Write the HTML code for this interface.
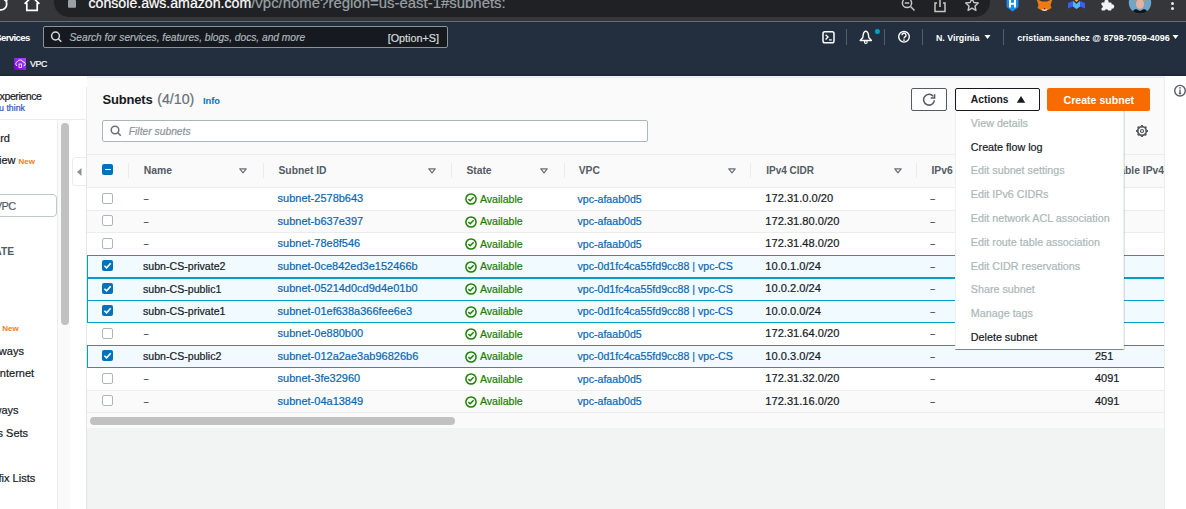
<!DOCTYPE html>
<html><head><meta charset="utf-8">
<style>
*{box-sizing:border-box;margin:0;padding:0}
html,body{width:1186px;height:509px;overflow:hidden;background:#fff;font-family:"Liberation Sans",sans-serif;color:#16191f;position:relative}
.t{position:absolute;white-space:nowrap}
.t.n{-webkit-text-stroke:0.2px currentColor}
.r{position:absolute}
</style></head><body>
<div class="r" style="left:0px;top:0px;width:1186px;height:21px;background:#35363a;"></div>
<div class="r" style="left:54px;top:-15px;width:936px;height:31.5px;background:#202124;border-radius:15px"></div>
<div class="t n" style="left:88.5px;top:-5.75px;font-size:14.15px;line-height:17.69px;font-weight:400;color:#fff;font-style:normal">console.aws.amazon.com<span style="color:#9aa0a6;font-size:14.95px">/vpc/home?region=us-east-1#subnets:</span></div>
<div class="r" style="left:0px;top:20.5px;width:1186px;height:1px;background:#6a6d71;"></div>
<svg class="r" style="left:0px;top:0px" width="12" height="12" viewBox="0 0 12 12"><path d="M-1.5 9.3 A5.6 5.6 0 0 0 6.2 2.2" stroke="#fff" stroke-width="1.7" fill="none"/><path d="M3.2 -0.5 L7.6 -0.5 L7.2 3.5 Z" fill="#fff"/></svg>
<svg class="r" style="left:22px;top:0px" width="20" height="12" viewBox="0 0 20 12"><path d="M2.6 3.8 L10 -3.2 L17.4 3.8 M4.8 2.8 V10.3 H15.2 V2.8" stroke="#fff" stroke-width="1.7" fill="none" stroke-linejoin="miter"/></svg>
<svg class="r" style="left:67px;top:0px" width="10" height="9" viewBox="0 0 10 9"><rect x="1" y="0" width="8" height="7.8" rx="0.8" fill="#9aa0a6"/></svg>
<svg class="r" style="left:901px;top:0px" width="16" height="13" viewBox="0 0 16 13"><circle cx="6" cy="3" r="4.6" stroke="#c4c7c5" stroke-width="1.5" fill="none"/><path d="M9.5 6.5 L13.5 10.5 M3.8 3 H8.2" stroke="#c4c7c5" stroke-width="1.5" fill="none"/></svg>
<svg class="r" style="left:933px;top:0px" width="14" height="13" viewBox="0 0 14 13"><path d="M4 3 H2 V11.5 H12 V3 H10 M7 -1 V7" stroke="#c4c7c5" stroke-width="1.5" fill="none"/></svg>
<svg class="r" style="left:964px;top:0px" width="16" height="13" viewBox="0 0 16 13"><path d="M8 -1.5 L9.9 2.5 L14.3 3 L11 6 L11.9 10.4 L8 8.2 L4.1 10.4 L5 6 L1.7 3 L6.1 2.5 Z" stroke="#c4c7c5" stroke-width="1.4" fill="none" stroke-linejoin="round"/></svg>
<svg class="r" style="left:1006px;top:0px" width="13" height="12" viewBox="0 0 13 12"><path d="M0.5 -1 H12.5 V7 L6.5 11.5 L0.5 7 Z" fill="#1a8af5"/><path d="M4 0 V7.5 M9 0 V7.5 M4 3.8 H9" stroke="#fff" stroke-width="2"/></svg>
<svg class="r" style="left:1035px;top:0px" width="19" height="12" viewBox="0 0 19 12"><path d="M1.5 -1 L3.5 5 L2.5 8 L6 10 L9.5 11 L13 10 L16.5 8 L15.5 5 L17.5 -1 L12 1.5 H7 Z" fill="#f07a12"/><path d="M7 9.3 Q9.5 11.5 12 9.3" stroke="#e8d8c8" stroke-width="1.3" fill="none"/><circle cx="9.5" cy="8.6" r="0.7" fill="#222"/></svg>
<svg class="r" style="left:1067px;top:0px" width="19" height="11" viewBox="0 0 19 11"><path d="M1 3 L6 1 L9.5 4 L13 1 L18 3 V8.5 L13 6.5 L9.5 9 L6 6.5 L1 8.5 Z" fill="#3a5cf0"/><path d="M6 1 L9.5 4 L13 1 L13 6.5 L9.5 9 L6 6.5 Z" fill="#58b4f5"/><path d="M7.5 0 L9.5 -1.5 L11.5 0 L9.5 2 Z" fill="#f5b820"/></svg>
<svg class="r" style="left:1100px;top:0px" width="16" height="11" viewBox="0 0 16 11"><rect x="1.5" y="2.5" width="10" height="8" rx="0.8" fill="#f1f3f4"/><circle cx="6.5" cy="2" r="2.2" fill="#f1f3f4"/><circle cx="12" cy="6.5" r="2.2" fill="#f1f3f4"/><circle cx="6.5" cy="11" r="1.8" fill="#35363a"/><circle cx="1.2" cy="6.5" r="1.6" fill="#35363a"/></svg>
<svg class="r" style="left:1128px;top:0px" width="24" height="15" viewBox="0 0 24 15"><defs><clipPath id="avc"><circle cx="12" cy="2.5" r="11.2"/></clipPath></defs><g clip-path="url(#avc)"><rect x="0" y="-10" width="24" height="25" fill="#6fa5c8"/><ellipse cx="12" cy="4" rx="4" ry="5" fill="#e3b2a2"/><path d="M6.5 -4 Q12 -8 17.5 -4 L17 2 Q15 -1 12 -0.5 Q9 -1 7 2 Z" fill="#e8902a"/><path d="M3 15 Q4 10 8 9 L12 11 L16 9 Q20 10 21 15 Z" fill="#151515"/></g></svg>
<svg class="r" style="left:1170px;top:0px" width="6" height="13" viewBox="0 0 6 13"><circle cx="2.5" cy="3.5" r="1.5" fill="#e8eaed"/><circle cx="2.5" cy="8.5" r="1.5" fill="#e8eaed"/></svg>
<div class="r" style="left:0px;top:21.5px;width:1186px;height:54px;background:#232f3e;"></div>
<div class="r" style="left:0px;top:74.3px;width:1186px;height:1.3px;background:#1e2937;"></div>
<div class="t" style="right:1156.2px;top:31.57px;font-size:9.6px;line-height:12.0px;font-weight:700;color:#fff;font-style:normal;letter-spacing:-0.6px">Services</div>
<div class="r" style="left:42.5px;top:26.2px;width:405px;height:21.7px;background:#16191f;border:1px solid #879596;border-radius:2px"></div>
<svg class="r" style="left:50px;top:31px" width="13" height="12" viewBox="0 0 13 12"><circle cx="5.5" cy="5" r="3.9" stroke="#d5dbdb" stroke-width="1.5" fill="none"/><path d="M8.3 7.8 L11.3 10.8" stroke="#d5dbdb" stroke-width="1.6"/></svg>
<div class="t n" style="left:69.5px;top:32.29px;font-size:10.2px;line-height:12.75px;font-weight:400;color:#aab7b8;font-style:italic">Search for services, features, blogs, docs, and more</div>
<div class="t n" style="left:387.7px;top:31.51px;font-size:10.8px;line-height:13.5px;font-weight:400;color:#d5dbdb;font-style:normal">[Option+S]</div>
<svg class="r" style="left:821px;top:30px" width="15" height="15" viewBox="0 0 15 15"><rect x="2" y="1.8" width="11" height="11" rx="1.8" stroke="#fff" stroke-width="1.5" fill="none"/><path d="M4.6 4.8 L7 7.1 L4.6 9.4" stroke="#fff" stroke-width="1.4" fill="none"/><path d="M8 9.9 H10.8" stroke="#fff" stroke-width="1.2"/></svg>
<div class="r" style="left:846px;top:29px;width:1px;height:16px;background:#555d68;"></div>
<svg class="r" style="left:858px;top:28px" width="22" height="17" viewBox="0 0 22 17"><path d="M2.2 12.5 L4.8 9.5 L5.3 6.2 Q6 3.2 7.8 3.2 Q9.6 3.2 10.3 6.2 L10.8 9.5 L13.4 12.5 Z" stroke="#fff" stroke-width="1.4" fill="none" stroke-linejoin="round"/><circle cx="7.8" cy="14" r="1.4" stroke="#fff" stroke-width="1.1" fill="none"/><circle cx="19.4" cy="3.6" r="2.5" fill="#00a1c9"/></svg>
<div class="r" style="left:884px;top:29px;width:1px;height:16px;background:#555d68;"></div>
<svg class="r" style="left:897px;top:30px" width="14" height="14" viewBox="0 0 14 14"><circle cx="7" cy="6.8" r="5.3" stroke="#fff" stroke-width="1.4" fill="none"/><path d="M5 5.3 A2 2 0 1 1 7.8 7 Q7 7.5 7 8.6" stroke="#fff" stroke-width="1.4" fill="none"/><circle cx="7" cy="10.1" r="0.85" fill="#fff"/></svg>
<div class="r" style="left:922px;top:29px;width:1px;height:16px;background:#555d68;"></div>
<div class="t" style="left:936px;top:32.95px;font-size:8.8px;line-height:11.0px;font-weight:700;color:#fff;font-style:normal">N. Virginia</div>
<svg class="r" style="left:983.5px;top:34px" width="7" height="6" viewBox="0 0 7 6"><path d="M0.5 1 H6.5 L3.5 5 Z" fill="#fff"/></svg>
<div class="r" style="left:1003px;top:29px;width:1px;height:16px;background:#555d68;"></div>
<div class="t" style="left:1017.3px;top:32.76px;font-size:9px;line-height:11.25px;font-weight:700;color:#fff;font-style:normal">cristiam.sanchez @ 8798-7059-4096</div>
<svg class="r" style="left:1172px;top:34px" width="7" height="6" viewBox="0 0 7 6"><path d="M0.5 1 H6.5 L3.5 5 Z" fill="#fff"/></svg>
<svg class="r" style="left:14px;top:58px" width="12" height="12" viewBox="0 0 12 12"><defs><linearGradient id="vg" x1="0" y1="1" x2="1" y2="0"><stop offset="0" stop-color="#7300c8"/><stop offset="1" stop-color="#a64dff"/></linearGradient></defs><rect width="12" height="12" fill="url(#vg)"/><path d="M3 8 A2.5 2.5 0 0 1 3.5 3.5 A3 3 0 0 1 9 4 A2 2 0 0 1 9.5 8" stroke="#fff" stroke-width="0.9" fill="none"/><rect x="5" y="6" width="2.4" height="3.5" stroke="#fff" stroke-width="0.8" fill="none"/></svg>
<div class="t n" style="left:30px;top:58.95px;font-size:8.8px;line-height:11.0px;font-weight:400;color:#fff;font-style:normal;letter-spacing:-0.4px">VPC</div>
<div class="r" style="left:0px;top:75.5px;width:86.5px;height:434px;background:#fff;"></div>
<div class="r" style="left:0px;top:119px;width:86.5px;height:1px;background:#eaeded;"></div>
<div class="r" style="left:86px;top:87px;width:1px;height:32px;background:#eaeded;"></div>
<div class="r" style="left:57px;top:120px;width:1px;height:389px;background:#eaeded;"></div>
<div class="r" style="left:58px;top:120px;width:11.5px;height:389px;background:#fafafa;"></div>
<div class="r" style="left:61px;top:122.8px;width:8px;height:202.7px;background:#c1c1c1;border-radius:4px"></div>
<div class="t n" style="right:1144.5px;top:89.70px;font-size:10.6px;line-height:13.25px;font-weight:400;color:#16191f;font-style:normal;letter-spacing:-0.45px">New VPC Experience</div>
<div class="t n" style="right:1161px;top:103.45px;font-size:8.8px;line-height:11.0px;font-weight:400;color:#2a55b5;font-style:normal">Tell us what you think</div>
<div class="t n" style="right:1176px;top:132.31px;font-size:11px;line-height:13.75px;font-weight:400;color:#16191f;font-style:normal">VPC Dashboard</div>
<div class="t n" style="right:1170.5px;top:154.31px;font-size:11px;line-height:13.75px;font-weight:400;color:#16191f;font-style:normal">EC2 Global View</div>
<div class="t" style="left:18.5px;top:157.23px;font-size:8px;line-height:10.0px;font-weight:700;color:#f0801a;font-style:normal">New</div>
<div class="r" style="left:-20px;top:194.2px;width:76.7px;height:22.5px;background:#fff;border:1px solid #c2c9c9;border-radius:4px"></div>
<div class="t n" style="right:1170.4px;top:199.61px;font-size:11px;line-height:13.75px;font-weight:400;color:#545b64;font-style:normal;letter-spacing:-0.6px">Filter by VPC</div>
<div class="t" style="right:1171.8px;top:245.59px;font-size:10.3px;line-height:12.88px;font-weight:700;color:#545b64;font-style:normal">VIRTUAL PRIVATE</div>
<div class="t" style="left:2.2px;top:323.83px;font-size:8px;line-height:10.0px;font-weight:700;color:#f0801a;font-style:normal">New</div>
<div class="t n" style="right:1162.1px;top:344.51px;font-size:11px;line-height:13.75px;font-weight:400;color:#16191f;font-style:normal">Carrier Gateways</div>
<div class="t n" style="right:1151.9px;top:367.41px;font-size:11px;line-height:13.75px;font-weight:400;color:#16191f;font-style:normal">Egress Only Internet</div>
<div class="t n" style="right:1167.4px;top:404.31px;font-size:11px;line-height:13.75px;font-weight:400;color:#16191f;font-style:normal">Gateways</div>
<div class="t n" style="right:1157.9px;top:426.81px;font-size:11px;line-height:13.75px;font-weight:400;color:#16191f;font-style:normal">DHCP Options Sets</div>
<div class="t n" style="right:1150.8px;top:471.81px;font-size:11px;line-height:13.75px;font-weight:400;color:#16191f;font-style:normal">Managed Prefix Lists</div>
<div class="r" style="left:71.5px;top:157px;width:16px;height:29px;background:#fff;border:1px solid #eaeded;border-right:none;border-radius:4px 0 0 4px"></div>
<svg class="r" style="left:76px;top:167px" width="7" height="10" viewBox="0 0 7 10"><path d="M5.5 1 V9 L1 5 Z" fill="#879596"/></svg>
<div class="r" style="left:86.5px;top:75.5px;width:1078px;height:434px;background:#f2f3f3;"></div>
<div class="r" style="left:86.5px;top:77px;width:1078px;height:351px;background:#fafafa;border-top:1px solid #eaeded"></div>
<div class="t" style="left:102.4px;top:91.87px;font-size:13px;line-height:16.25px;font-weight:700;color:#16191f;font-style:normal;letter-spacing:-0.15px">Subnets</div>
<div class="t n" style="left:157.2px;top:90.70px;font-size:14.2px;line-height:17.75px;font-weight:400;color:#687078;font-style:normal">(4/10)</div>
<div class="t" style="left:203px;top:96.37px;font-size:9.3px;line-height:11.62px;font-weight:700;color:#0073bb;font-style:normal">Info</div>
<div class="r" style="left:102.4px;top:120.2px;width:546px;height:21.6px;background:#fff;border:1px solid #aab7b8;border-radius:2px"></div>
<svg class="r" style="left:110px;top:125px" width="12" height="12" viewBox="0 0 12 12"><circle cx="5" cy="5" r="3.8" stroke="#687078" stroke-width="1.5" fill="none"/><path d="M7.8 7.8 L10.8 10.8" stroke="#687078" stroke-width="1.6"/></svg>
<div class="t n" style="left:128.8px;top:125.59px;font-size:10.3px;line-height:12.88px;font-weight:400;color:#879596;font-style:italic">Filter subnets</div>
<svg class="r" style="left:1135px;top:124px" width="14" height="14" viewBox="0 0 14 14"><circle cx="7" cy="7" r="4.3" stroke="#545b64" stroke-width="1.7" fill="none"/><rect x="6" y="1" width="2" height="2.2" fill="#545b64" transform="rotate(0 7 7)"/><rect x="6" y="1" width="2" height="2.2" fill="#545b64" transform="rotate(45 7 7)"/><rect x="6" y="1" width="2" height="2.2" fill="#545b64" transform="rotate(90 7 7)"/><rect x="6" y="1" width="2" height="2.2" fill="#545b64" transform="rotate(135 7 7)"/><rect x="6" y="1" width="2" height="2.2" fill="#545b64" transform="rotate(180 7 7)"/><rect x="6" y="1" width="2" height="2.2" fill="#545b64" transform="rotate(225 7 7)"/><rect x="6" y="1" width="2" height="2.2" fill="#545b64" transform="rotate(270 7 7)"/><rect x="6" y="1" width="2" height="2.2" fill="#545b64" transform="rotate(315 7 7)"/><circle cx="7" cy="7" r="1.5" stroke="#545b64" stroke-width="1.2" fill="none"/></svg>
<div class="r" style="left:911.4px;top:88.3px;width:35.3px;height:22.4px;background:#fff;border:1px solid #545b64;border-radius:2px"></div>
<svg class="r" style="left:922px;top:92px" width="14" height="14" viewBox="0 0 14 14"><path d="M11.3 4.4 A5.4 5.4 0 1 0 12.4 8.2" stroke="#545b64" stroke-width="1.5" fill="none"/><path d="M12.6 2.2 V6.1 H8.7" stroke="#545b64" stroke-width="1.5" fill="none"/></svg>
<div class="r" style="left:955.3px;top:88.3px;width:84.4px;height:22.4px;background:#fff;border:1px solid #16191f;border-radius:2px"></div>
<div class="t" style="left:970.8px;top:93.99px;font-size:10.3px;line-height:12.88px;font-weight:700;color:#16191f;font-style:normal">Actions</div>
<svg class="r" style="left:1016px;top:95px" width="10" height="9" viewBox="0 0 10 9"><path d="M0.8 7.8 H9.2 L5 1 Z" fill="#16191f"/></svg>
<div class="r" style="left:1047px;top:88.3px;width:103px;height:22.4px;background:#f66c02;border-radius:2px"></div>
<div class="t" style="left:1063.5px;top:93.70px;font-size:10.6px;line-height:13.25px;font-weight:700;color:#fff;font-style:normal">Create subnet</div>
<div class="r" style="left:86.5px;top:154px;width:1078px;height:33.5px;background:#fafafa;border-top:1px solid #eaeded"></div>
<div class="r" style="left:102.3px;top:164.1px;width:10.6px;height:10.6px;background:#0073bb;border-radius:2px"></div>
<div class="r" style="left:104.6px;top:168.7px;width:6px;height:1.5px;background:#fff;"></div>
<div class="r" style="left:128.4px;top:163px;width:1px;height:15px;background:#eaeded;"></div>
<div class="r" style="left:263.4px;top:163px;width:1px;height:15px;background:#eaeded;"></div>
<div class="r" style="left:450.6px;top:163px;width:1px;height:15px;background:#eaeded;"></div>
<div class="r" style="left:563.5px;top:163px;width:1px;height:15px;background:#eaeded;"></div>
<div class="r" style="left:750.4px;top:163px;width:1px;height:15px;background:#eaeded;"></div>
<div class="r" style="left:915.6px;top:163px;width:1px;height:15px;background:#eaeded;"></div>
<div class="t" style="left:143.8px;top:164.30px;font-size:10.4px;line-height:13.0px;font-weight:700;color:#545b64;font-style:normal">Name</div>
<svg class="r" style="left:239.2px;top:167.8px" width="8" height="6" viewBox="0 0 8 6"><path d="M0.8 0.8 H7.2 L4 4.8 Z" stroke="#687078" stroke-width="1.2" fill="none" stroke-linejoin="round"/></svg>
<div class="t" style="left:278.5px;top:164.99px;font-size:10.3px;line-height:12.88px;font-weight:700;color:#545b64;font-style:normal">Subnet ID</div>
<svg class="r" style="left:427.7px;top:167.8px" width="8" height="6" viewBox="0 0 8 6"><path d="M0.8 0.8 H7.2 L4 4.8 Z" stroke="#687078" stroke-width="1.2" fill="none" stroke-linejoin="round"/></svg>
<div class="t" style="left:466.4px;top:164.99px;font-size:10.3px;line-height:12.88px;font-weight:700;color:#545b64;font-style:normal">State</div>
<svg class="r" style="left:540.2px;top:167.8px" width="8" height="6" viewBox="0 0 8 6"><path d="M0.8 0.8 H7.2 L4 4.8 Z" stroke="#687078" stroke-width="1.2" fill="none" stroke-linejoin="round"/></svg>
<div class="t" style="left:578.7px;top:164.99px;font-size:10.3px;line-height:12.88px;font-weight:700;color:#545b64;font-style:normal">VPC</div>
<svg class="r" style="left:728.2px;top:167.8px" width="8" height="6" viewBox="0 0 8 6"><path d="M0.8 0.8 H7.2 L4 4.8 Z" stroke="#687078" stroke-width="1.2" fill="none" stroke-linejoin="round"/></svg>
<div class="t" style="left:766.2px;top:165.28px;font-size:10px;line-height:12.5px;font-weight:700;color:#545b64;font-style:normal">IPv4 CIDR</div>
<svg class="r" style="left:893.5px;top:167.8px" width="8" height="6" viewBox="0 0 8 6"><path d="M0.8 0.8 H7.2 L4 4.8 Z" stroke="#687078" stroke-width="1.2" fill="none" stroke-linejoin="round"/></svg>
<div class="t" style="left:931.5px;top:164.99px;font-size:10.3px;line-height:12.88px;font-weight:700;color:#545b64;font-style:normal">IPv6</div>
<div class="t" style="right:22px;top:164.99px;font-size:10.3px;line-height:12.88px;font-weight:700;color:#545b64;font-style:normal">Available IPv4</div>
<div class="r" style="left:86.5px;top:187.4px;width:1078px;height:22.5px;background:#fff;border-top:1px solid #eaeded"></div>
<div class="r" style="left:86.5px;top:209.9px;width:1078px;height:22.5px;background:#fafafa;border-top:1px solid #eaeded"></div>
<div class="r" style="left:86.5px;top:232.4px;width:1078px;height:22.5px;background:#fff;border-top:1px solid #eaeded"></div>
<div class="r" style="left:86.5px;top:254.9px;width:1078px;height:22.5px;background:#f1faff;border-top:1px solid #eaeded"></div>
<div class="r" style="left:86.5px;top:277.4px;width:1078px;height:22.5px;background:#f1faff;border-top:1px solid #eaeded"></div>
<div class="r" style="left:86.5px;top:299.9px;width:1078px;height:22.5px;background:#f1faff;border-top:1px solid #eaeded"></div>
<div class="r" style="left:86.5px;top:322.4px;width:1078px;height:22.5px;background:#fff;border-top:1px solid #eaeded"></div>
<div class="r" style="left:86.5px;top:344.9px;width:1078px;height:22.5px;background:#f1faff;border-top:1px solid #eaeded"></div>
<div class="r" style="left:86.5px;top:367.4px;width:1078px;height:22.5px;background:#fff;border-top:1px solid #eaeded"></div>
<div class="r" style="left:86.5px;top:389.9px;width:1078px;height:22.5px;background:#fafafa;border-top:1px solid #eaeded"></div>
<div class="r" style="left:86.5px;top:255.0px;width:1078px;height:23.1px;background:none;border:1px solid #00a1c9"></div>
<div class="r" style="left:86.5px;top:277.5px;width:1078px;height:23.1px;background:none;border:1px solid #00a1c9"></div>
<div class="r" style="left:86.5px;top:300.0px;width:1078px;height:23.1px;background:none;border:1px solid #00a1c9"></div>
<div class="r" style="left:86.5px;top:345.0px;width:1078px;height:23.1px;background:none;border:1px solid #00a1c9"></div>
<svg class="r" style="left:102.2px;top:192.6px" width="11" height="11" viewBox="0 0 11 11"><rect x="0.5" y="0.5" width="10" height="10" rx="1.5" fill="#fff" stroke="#aab7b8" stroke-width="1"/></svg>
<div class="t" style="left:143.5px;top:193.27px;font-size:9.5px;line-height:11.88px;font-weight:700;color:#545b64;font-style:normal">–</div>
<div class="t n" style="left:277.6px;top:192.11px;font-size:11px;line-height:13.75px;font-weight:400;color:#0866b0;font-style:normal">subnet-2578b643</div>
<svg class="r" style="left:464.9px;top:193.0px" width="12" height="12" viewBox="0 0 12 12"><circle cx="6" cy="6" r="5.1" stroke="#1d8102" stroke-width="1.5" fill="none"/><path d="M3.4 6.1 L5.2 7.8 L8.6 4.3" stroke="#1d8102" stroke-width="1.5" fill="none"/></svg>
<div class="t n" style="left:479.9px;top:192.50px;font-size:10.6px;line-height:13.25px;font-weight:400;color:#1a7d02;font-style:normal">Available</div>
<div class="t n" style="left:577.5px;top:192.50px;font-size:10.6px;line-height:13.25px;font-weight:400;color:#0866b0;font-style:normal">vpc-afaab0d5</div>
<div class="t n" style="left:765.3px;top:192.01px;font-size:11.1px;line-height:13.88px;font-weight:400;color:#16191f;font-style:normal">172.31.0.0/20</div>
<div class="t" style="left:930px;top:193.27px;font-size:9.5px;line-height:11.88px;font-weight:700;color:#545b64;font-style:normal">–</div>
<div class="t n" style="left:1095px;top:192.11px;font-size:11px;line-height:13.75px;font-weight:400;color:#16191f;font-style:normal">4091</div>
<svg class="r" style="left:102.2px;top:215.1px" width="11" height="11" viewBox="0 0 11 11"><rect x="0.5" y="0.5" width="10" height="10" rx="1.5" fill="#fff" stroke="#aab7b8" stroke-width="1"/></svg>
<div class="t" style="left:143.5px;top:215.77px;font-size:9.5px;line-height:11.88px;font-weight:700;color:#545b64;font-style:normal">–</div>
<div class="t n" style="left:277.6px;top:214.61px;font-size:11px;line-height:13.75px;font-weight:400;color:#0866b0;font-style:normal">subnet-b637e397</div>
<svg class="r" style="left:464.9px;top:215.5px" width="12" height="12" viewBox="0 0 12 12"><circle cx="6" cy="6" r="5.1" stroke="#1d8102" stroke-width="1.5" fill="none"/><path d="M3.4 6.1 L5.2 7.8 L8.6 4.3" stroke="#1d8102" stroke-width="1.5" fill="none"/></svg>
<div class="t n" style="left:479.9px;top:215.00px;font-size:10.6px;line-height:13.25px;font-weight:400;color:#1a7d02;font-style:normal">Available</div>
<div class="t n" style="left:577.5px;top:215.00px;font-size:10.6px;line-height:13.25px;font-weight:400;color:#0866b0;font-style:normal">vpc-afaab0d5</div>
<div class="t n" style="left:765.3px;top:214.51px;font-size:11.1px;line-height:13.88px;font-weight:400;color:#16191f;font-style:normal">172.31.80.0/20</div>
<div class="t" style="left:930px;top:215.77px;font-size:9.5px;line-height:11.88px;font-weight:700;color:#545b64;font-style:normal">–</div>
<div class="t n" style="left:1095px;top:214.61px;font-size:11px;line-height:13.75px;font-weight:400;color:#16191f;font-style:normal">4091</div>
<svg class="r" style="left:102.2px;top:237.6px" width="11" height="11" viewBox="0 0 11 11"><rect x="0.5" y="0.5" width="10" height="10" rx="1.5" fill="#fff" stroke="#aab7b8" stroke-width="1"/></svg>
<div class="t" style="left:143.5px;top:238.27px;font-size:9.5px;line-height:11.88px;font-weight:700;color:#545b64;font-style:normal">–</div>
<div class="t n" style="left:277.6px;top:237.11px;font-size:11px;line-height:13.75px;font-weight:400;color:#0866b0;font-style:normal">subnet-78e8f546</div>
<svg class="r" style="left:464.9px;top:238.0px" width="12" height="12" viewBox="0 0 12 12"><circle cx="6" cy="6" r="5.1" stroke="#1d8102" stroke-width="1.5" fill="none"/><path d="M3.4 6.1 L5.2 7.8 L8.6 4.3" stroke="#1d8102" stroke-width="1.5" fill="none"/></svg>
<div class="t n" style="left:479.9px;top:237.50px;font-size:10.6px;line-height:13.25px;font-weight:400;color:#1a7d02;font-style:normal">Available</div>
<div class="t n" style="left:577.5px;top:237.50px;font-size:10.6px;line-height:13.25px;font-weight:400;color:#0866b0;font-style:normal">vpc-afaab0d5</div>
<div class="t n" style="left:765.3px;top:237.01px;font-size:11.1px;line-height:13.88px;font-weight:400;color:#16191f;font-style:normal">172.31.48.0/20</div>
<div class="t" style="left:930px;top:238.27px;font-size:9.5px;line-height:11.88px;font-weight:700;color:#545b64;font-style:normal">–</div>
<div class="t n" style="left:1095px;top:237.11px;font-size:11px;line-height:13.75px;font-weight:400;color:#16191f;font-style:normal">4091</div>
<svg class="r" style="left:102.2px;top:260.1px" width="11" height="11" viewBox="0 0 11 11"><rect x="0" y="0" width="11" height="11" rx="2" fill="#0073bb"/><path d="M2.4 5.7 L4.6 7.9 L8.7 3.3" stroke="#fff" stroke-width="1.6" fill="none"/></svg>
<div class="t n" style="left:143px;top:260.00px;font-size:10.6px;line-height:13.25px;font-weight:400;color:#16191f;font-style:normal">subn-CS-private2</div>
<div class="t n" style="left:277.6px;top:259.61px;font-size:11px;line-height:13.75px;font-weight:400;color:#0866b0;font-style:normal">subnet-0ce842ed3e152466b</div>
<svg class="r" style="left:464.9px;top:260.5px" width="12" height="12" viewBox="0 0 12 12"><circle cx="6" cy="6" r="5.1" stroke="#1d8102" stroke-width="1.5" fill="none"/><path d="M3.4 6.1 L5.2 7.8 L8.6 4.3" stroke="#1d8102" stroke-width="1.5" fill="none"/></svg>
<div class="t n" style="left:479.9px;top:260.00px;font-size:10.6px;line-height:13.25px;font-weight:400;color:#1a7d02;font-style:normal">Available</div>
<div class="t n" style="left:577.5px;top:260.00px;font-size:10.6px;line-height:13.25px;font-weight:400;color:#0866b0;font-style:normal">vpc-0d1fc4ca55fd9cc88 | vpc-CS</div>
<div class="t n" style="left:765.3px;top:259.51px;font-size:11.1px;line-height:13.88px;font-weight:400;color:#16191f;font-style:normal">10.0.1.0/24</div>
<div class="t" style="left:930px;top:260.77px;font-size:9.5px;line-height:11.88px;font-weight:700;color:#545b64;font-style:normal">–</div>
<div class="t n" style="left:1095px;top:259.61px;font-size:11px;line-height:13.75px;font-weight:400;color:#16191f;font-style:normal">251</div>
<svg class="r" style="left:102.2px;top:282.59999999999997px" width="11" height="11" viewBox="0 0 11 11"><rect x="0" y="0" width="11" height="11" rx="2" fill="#0073bb"/><path d="M2.4 5.7 L4.6 7.9 L8.7 3.3" stroke="#fff" stroke-width="1.6" fill="none"/></svg>
<div class="t n" style="left:143px;top:282.50px;font-size:10.6px;line-height:13.25px;font-weight:400;color:#16191f;font-style:normal">subn-CS-public1</div>
<div class="t n" style="left:277.6px;top:282.11px;font-size:11px;line-height:13.75px;font-weight:400;color:#0866b0;font-style:normal">subnet-05214d0cd9d4e01b0</div>
<svg class="r" style="left:464.9px;top:283.0px" width="12" height="12" viewBox="0 0 12 12"><circle cx="6" cy="6" r="5.1" stroke="#1d8102" stroke-width="1.5" fill="none"/><path d="M3.4 6.1 L5.2 7.8 L8.6 4.3" stroke="#1d8102" stroke-width="1.5" fill="none"/></svg>
<div class="t n" style="left:479.9px;top:282.50px;font-size:10.6px;line-height:13.25px;font-weight:400;color:#1a7d02;font-style:normal">Available</div>
<div class="t n" style="left:577.5px;top:282.50px;font-size:10.6px;line-height:13.25px;font-weight:400;color:#0866b0;font-style:normal">vpc-0d1fc4ca55fd9cc88 | vpc-CS</div>
<div class="t n" style="left:765.3px;top:282.01px;font-size:11.1px;line-height:13.88px;font-weight:400;color:#16191f;font-style:normal">10.0.2.0/24</div>
<div class="t" style="left:930px;top:283.27px;font-size:9.5px;line-height:11.88px;font-weight:700;color:#545b64;font-style:normal">–</div>
<div class="t n" style="left:1095px;top:282.11px;font-size:11px;line-height:13.75px;font-weight:400;color:#16191f;font-style:normal">251</div>
<svg class="r" style="left:102.2px;top:305.09999999999997px" width="11" height="11" viewBox="0 0 11 11"><rect x="0" y="0" width="11" height="11" rx="2" fill="#0073bb"/><path d="M2.4 5.7 L4.6 7.9 L8.7 3.3" stroke="#fff" stroke-width="1.6" fill="none"/></svg>
<div class="t n" style="left:143px;top:305.00px;font-size:10.6px;line-height:13.25px;font-weight:400;color:#16191f;font-style:normal">subn-CS-private1</div>
<div class="t n" style="left:277.6px;top:304.61px;font-size:11px;line-height:13.75px;font-weight:400;color:#0866b0;font-style:normal">subnet-01ef638a366fee6e3</div>
<svg class="r" style="left:464.9px;top:305.5px" width="12" height="12" viewBox="0 0 12 12"><circle cx="6" cy="6" r="5.1" stroke="#1d8102" stroke-width="1.5" fill="none"/><path d="M3.4 6.1 L5.2 7.8 L8.6 4.3" stroke="#1d8102" stroke-width="1.5" fill="none"/></svg>
<div class="t n" style="left:479.9px;top:305.00px;font-size:10.6px;line-height:13.25px;font-weight:400;color:#1a7d02;font-style:normal">Available</div>
<div class="t n" style="left:577.5px;top:305.00px;font-size:10.6px;line-height:13.25px;font-weight:400;color:#0866b0;font-style:normal">vpc-0d1fc4ca55fd9cc88 | vpc-CS</div>
<div class="t n" style="left:765.3px;top:304.51px;font-size:11.1px;line-height:13.88px;font-weight:400;color:#16191f;font-style:normal">10.0.0.0/24</div>
<div class="t" style="left:930px;top:305.77px;font-size:9.5px;line-height:11.88px;font-weight:700;color:#545b64;font-style:normal">–</div>
<div class="t n" style="left:1095px;top:304.61px;font-size:11px;line-height:13.75px;font-weight:400;color:#16191f;font-style:normal">251</div>
<svg class="r" style="left:102.2px;top:327.59999999999997px" width="11" height="11" viewBox="0 0 11 11"><rect x="0.5" y="0.5" width="10" height="10" rx="1.5" fill="#fff" stroke="#aab7b8" stroke-width="1"/></svg>
<div class="t" style="left:143.5px;top:328.27px;font-size:9.5px;line-height:11.88px;font-weight:700;color:#545b64;font-style:normal">–</div>
<div class="t n" style="left:277.6px;top:327.11px;font-size:11px;line-height:13.75px;font-weight:400;color:#0866b0;font-style:normal">subnet-0e880b00</div>
<svg class="r" style="left:464.9px;top:328.0px" width="12" height="12" viewBox="0 0 12 12"><circle cx="6" cy="6" r="5.1" stroke="#1d8102" stroke-width="1.5" fill="none"/><path d="M3.4 6.1 L5.2 7.8 L8.6 4.3" stroke="#1d8102" stroke-width="1.5" fill="none"/></svg>
<div class="t n" style="left:479.9px;top:327.50px;font-size:10.6px;line-height:13.25px;font-weight:400;color:#1a7d02;font-style:normal">Available</div>
<div class="t n" style="left:577.5px;top:327.50px;font-size:10.6px;line-height:13.25px;font-weight:400;color:#0866b0;font-style:normal">vpc-afaab0d5</div>
<div class="t n" style="left:765.3px;top:327.01px;font-size:11.1px;line-height:13.88px;font-weight:400;color:#16191f;font-style:normal">172.31.64.0/20</div>
<div class="t" style="left:930px;top:328.27px;font-size:9.5px;line-height:11.88px;font-weight:700;color:#545b64;font-style:normal">–</div>
<div class="t n" style="left:1095px;top:327.11px;font-size:11px;line-height:13.75px;font-weight:400;color:#16191f;font-style:normal">4091</div>
<svg class="r" style="left:102.2px;top:350.09999999999997px" width="11" height="11" viewBox="0 0 11 11"><rect x="0" y="0" width="11" height="11" rx="2" fill="#0073bb"/><path d="M2.4 5.7 L4.6 7.9 L8.7 3.3" stroke="#fff" stroke-width="1.6" fill="none"/></svg>
<div class="t n" style="left:143px;top:350.00px;font-size:10.6px;line-height:13.25px;font-weight:400;color:#16191f;font-style:normal">subn-CS-public2</div>
<div class="t n" style="left:277.6px;top:349.61px;font-size:11px;line-height:13.75px;font-weight:400;color:#0866b0;font-style:normal">subnet-012a2ae3ab96826b6</div>
<svg class="r" style="left:464.9px;top:350.5px" width="12" height="12" viewBox="0 0 12 12"><circle cx="6" cy="6" r="5.1" stroke="#1d8102" stroke-width="1.5" fill="none"/><path d="M3.4 6.1 L5.2 7.8 L8.6 4.3" stroke="#1d8102" stroke-width="1.5" fill="none"/></svg>
<div class="t n" style="left:479.9px;top:350.00px;font-size:10.6px;line-height:13.25px;font-weight:400;color:#1a7d02;font-style:normal">Available</div>
<div class="t n" style="left:577.5px;top:350.00px;font-size:10.6px;line-height:13.25px;font-weight:400;color:#0866b0;font-style:normal">vpc-0d1fc4ca55fd9cc88 | vpc-CS</div>
<div class="t n" style="left:765.3px;top:349.51px;font-size:11.1px;line-height:13.88px;font-weight:400;color:#16191f;font-style:normal">10.0.3.0/24</div>
<div class="t" style="left:930px;top:350.77px;font-size:9.5px;line-height:11.88px;font-weight:700;color:#545b64;font-style:normal">–</div>
<div class="t n" style="left:1095px;top:349.61px;font-size:11px;line-height:13.75px;font-weight:400;color:#16191f;font-style:normal">251</div>
<svg class="r" style="left:102.2px;top:372.59999999999997px" width="11" height="11" viewBox="0 0 11 11"><rect x="0.5" y="0.5" width="10" height="10" rx="1.5" fill="#fff" stroke="#aab7b8" stroke-width="1"/></svg>
<div class="t" style="left:143.5px;top:373.27px;font-size:9.5px;line-height:11.88px;font-weight:700;color:#545b64;font-style:normal">–</div>
<div class="t n" style="left:277.6px;top:372.11px;font-size:11px;line-height:13.75px;font-weight:400;color:#0866b0;font-style:normal">subnet-3fe32960</div>
<svg class="r" style="left:464.9px;top:373.0px" width="12" height="12" viewBox="0 0 12 12"><circle cx="6" cy="6" r="5.1" stroke="#1d8102" stroke-width="1.5" fill="none"/><path d="M3.4 6.1 L5.2 7.8 L8.6 4.3" stroke="#1d8102" stroke-width="1.5" fill="none"/></svg>
<div class="t n" style="left:479.9px;top:372.50px;font-size:10.6px;line-height:13.25px;font-weight:400;color:#1a7d02;font-style:normal">Available</div>
<div class="t n" style="left:577.5px;top:372.50px;font-size:10.6px;line-height:13.25px;font-weight:400;color:#0866b0;font-style:normal">vpc-afaab0d5</div>
<div class="t n" style="left:765.3px;top:372.01px;font-size:11.1px;line-height:13.88px;font-weight:400;color:#16191f;font-style:normal">172.31.32.0/20</div>
<div class="t" style="left:930px;top:373.27px;font-size:9.5px;line-height:11.88px;font-weight:700;color:#545b64;font-style:normal">–</div>
<div class="t n" style="left:1095px;top:372.11px;font-size:11px;line-height:13.75px;font-weight:400;color:#16191f;font-style:normal">4091</div>
<svg class="r" style="left:102.2px;top:395.09999999999997px" width="11" height="11" viewBox="0 0 11 11"><rect x="0.5" y="0.5" width="10" height="10" rx="1.5" fill="#fff" stroke="#aab7b8" stroke-width="1"/></svg>
<div class="t" style="left:143.5px;top:395.77px;font-size:9.5px;line-height:11.88px;font-weight:700;color:#545b64;font-style:normal">–</div>
<div class="t n" style="left:277.6px;top:394.61px;font-size:11px;line-height:13.75px;font-weight:400;color:#0866b0;font-style:normal">subnet-04a13849</div>
<svg class="r" style="left:464.9px;top:395.5px" width="12" height="12" viewBox="0 0 12 12"><circle cx="6" cy="6" r="5.1" stroke="#1d8102" stroke-width="1.5" fill="none"/><path d="M3.4 6.1 L5.2 7.8 L8.6 4.3" stroke="#1d8102" stroke-width="1.5" fill="none"/></svg>
<div class="t n" style="left:479.9px;top:395.00px;font-size:10.6px;line-height:13.25px;font-weight:400;color:#1a7d02;font-style:normal">Available</div>
<div class="t n" style="left:577.5px;top:395.00px;font-size:10.6px;line-height:13.25px;font-weight:400;color:#0866b0;font-style:normal">vpc-afaab0d5</div>
<div class="t n" style="left:765.3px;top:394.51px;font-size:11.1px;line-height:13.88px;font-weight:400;color:#16191f;font-style:normal">172.31.16.0/20</div>
<div class="t" style="left:930px;top:395.77px;font-size:9.5px;line-height:11.88px;font-weight:700;color:#545b64;font-style:normal">–</div>
<div class="t n" style="left:1095px;top:394.61px;font-size:11px;line-height:13.75px;font-weight:400;color:#16191f;font-style:normal">4091</div>
<div class="r" style="left:86.5px;top:412.4px;width:1078px;height:15.5px;background:#fafafa;border-top:1px solid #eaeded"></div>
<div class="r" style="left:90px;top:417.2px;width:365px;height:7.7px;background:#c1c1c1;border-radius:4px"></div>
<div class="r" style="left:86px;top:120px;width:1px;height:389px;background:#e4e7e7;"></div>
<div class="r" style="left:1164.4px;top:75.5px;width:21.6px;height:434px;background:#fff;border-left:1px solid #eaeded"></div>
<svg class="r" style="left:1173px;top:84px" width="14" height="14" viewBox="0 0 14 14"><circle cx="7" cy="6.7" r="5.3" stroke="#545b64" stroke-width="1.4" fill="none"/><path d="M7 5.6 V9.5 M5.8 9.5 H8.2" stroke="#545b64" stroke-width="1.3"/><circle cx="7" cy="3.9" r="0.8" fill="#545b64"/></svg>
<div class="r" style="left:955.3px;top:110.7px;width:168.7px;height:239.5px;background:#fff;border:1px solid #eef0f0;border-top:none;border-bottom:1px solid #7d868c;box-shadow:1px 0 0 0 rgba(0,28,36,.12)"></div>
<div class="t n" style="left:970.8px;top:116.76px;font-size:10.75px;line-height:13.44px;font-weight:400;color:#aab7b8;font-style:normal">View details</div>
<div class="t n" style="left:970.8px;top:140.66px;font-size:10.75px;line-height:13.44px;font-weight:400;color:#16191f;font-style:normal">Create flow log</div>
<div class="t n" style="left:970.8px;top:164.46px;font-size:10.75px;line-height:13.44px;font-weight:400;color:#aab7b8;font-style:normal">Edit subnet settings</div>
<div class="t n" style="left:970.8px;top:187.76px;font-size:10.75px;line-height:13.44px;font-weight:400;color:#aab7b8;font-style:normal">Edit IPv6 CIDRs</div>
<div class="t n" style="left:970.8px;top:211.56px;font-size:10.75px;line-height:13.44px;font-weight:400;color:#aab7b8;font-style:normal">Edit network ACL association</div>
<div class="t n" style="left:970.8px;top:235.56px;font-size:10.75px;line-height:13.44px;font-weight:400;color:#aab7b8;font-style:normal">Edit route table association</div>
<div class="t n" style="left:970.8px;top:259.56px;font-size:10.75px;line-height:13.44px;font-weight:400;color:#aab7b8;font-style:normal">Edit CIDR reservations</div>
<div class="t n" style="left:970.8px;top:283.06px;font-size:10.75px;line-height:13.44px;font-weight:400;color:#aab7b8;font-style:normal">Share subnet</div>
<div class="t n" style="left:970.8px;top:306.86px;font-size:10.75px;line-height:13.44px;font-weight:400;color:#aab7b8;font-style:normal">Manage tags</div>
<div class="t n" style="left:970.8px;top:330.66px;font-size:10.75px;line-height:13.44px;font-weight:400;color:#16191f;font-style:normal">Delete subnet</div>
</body></html>
